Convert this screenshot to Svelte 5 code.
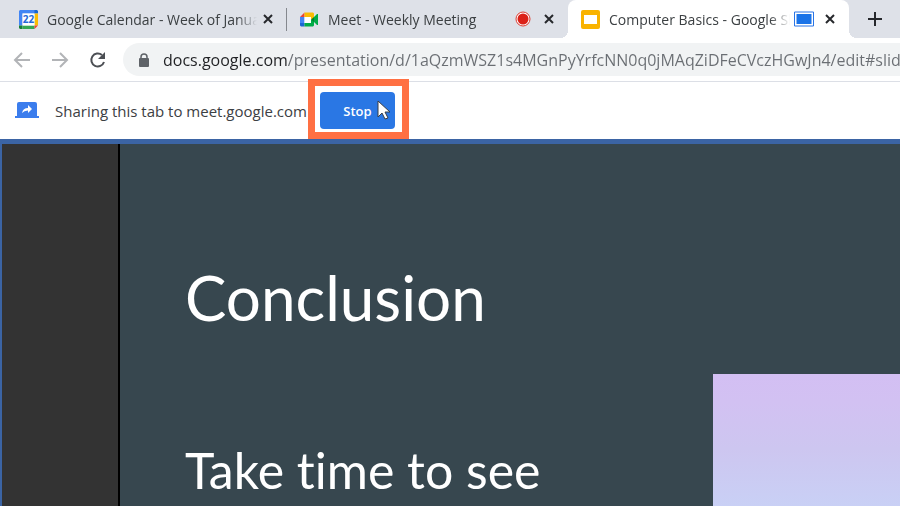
<script lang="ts">
	type Tab = { id: string; title: string; state?: string };

	const tabs: Tab[] = [
		{ id: 'calendar', title: 'Google Calendar - Week of January' },
		{ id: 'meet', title: 'Meet - Weekly Meeting', state: 'recording' },
		{ id: 'slides', title: 'Computer Basics - Google Slides', state: 'sharing' }
	];

	let active = $state('slides');
	let sharing = $state(true);
	let url = $state('docs.google.com/presentation/d/1aQzmWSZ1s4MGnPyYrfcNN0q0jMAqZiDFeCVczHGwJn4/edit#slide=id.p');
</script>

<div class="browser">
	<nav class="tabs" aria-label="Tabs">
		{#each tabs as tab}
			<div class="tab {tab.id === active ? 'active' : ''}">
				<button class="tab-label" onclick={() => active = tab.id}>
					{#if tab.id === 'calendar'}
						<svg class="favicon" viewBox="0 0 19 19">
							<path fill="#4285f4" d="M1 0h15v3.500H3.500v12H0V1z" />
							<path fill="#1967d2" d="M15.500 0H18l1 1v2.500h-3.500z" />
							<path fill="#fbbc04" d="M15.500 3.500H19v12h-3.500z" />
							<path fill="#188038" d="M0 15.500h3.500V19H1l-1-1z" />
							<path fill="#34a853" d="M3.500 15.500h12V19h-12z" />
							<path fill="#ea4335" d="M15.500 15.500H19L15.500 19z" />
							<path fill="#fff" d="M3.500 3.500h12v12h-12z" />
							<text x="9.5" y="13" text-anchor="middle">22</text>
						</svg>
					{:else if tab.id === 'meet'}
						<svg class="favicon" viewBox="0 0 19 19">
							<path fill="#ea4335" d="M4.500 2.500V7H0z" />
							<path fill="#4285f4" d="M0 7h4.500v6H0z" />
							<path fill="#1967d2" d="M0 13h4.500v3.500H1l-1-1z" />
							<path fill="#fbbc04" d="M4.500 2.500H13l1 1v5l-3 1V7H4.500z" />
							<path fill="#00ac47" d="M4.500 13H11v-3l3-1v6.500l-1 1H4.500z" />
							<path fill="#fff" d="M4.500 7H11v6H4.500z" />
							<path fill="#00832d" d="M11 9.500L14 7v5z" />
							<path fill="#00ac47" d="M14 7l3-3h1v11h-1l-3-3z" />
						</svg>
					{:else}
						<svg class="favicon" viewBox="0 0 19 19">
							<rect width="19" height="19" rx="2" fill="#f9b300" />
							<path fill="#fff" d="M3 5h13v9H3z" />
						</svg>
					{/if}
					<span class="title">{tab.title}</span>
				</button>
				{#if tab.state === 'recording'}
					<svg class="status" viewBox="0 0 20 16" role="img" aria-label="Recording">
						<circle cx="10" cy="8" r="7" fill="#fff" stroke="#dc3b30" />
						<circle cx="10" cy="8" r="5.500" fill="#db2118" />
					</svg>
				{:else if tab.state === 'sharing'}
					<svg class="status" viewBox="0 0 20 16" role="img" aria-label="Sharing">
						<path fill="#fff" stroke="#2a75e6" d="M.5 1h19v14H.5z" />
						<path fill="#1a73e8" d="M2.500 3h15v10h-15z" />
					</svg>
				{/if}
				<button class="close" aria-label="Close {tab.title}">
					<svg viewBox="0 0 10 10"><path d="M1 1l8 8M9 1l-8 8" /></svg>
				</button>
			</div>
		{/each}
		<button class="new-tab" aria-label="New tab">
			<svg viewBox="0 0 14 14"><path d="M7 0v14M0 7h14" /></svg>
		</button>
	</nav>

	<div class="toolbar">
		<button class="nav faded" aria-label="Back">
			<svg viewBox="0 0 18 18"><path d="M17 9H2M9 2L2 9l7 7" /></svg>
		</button>
		<button class="nav faded" aria-label="Forward">
			<svg viewBox="0 0 18 18"><path d="M1 9h15M9 2l7 7-7 7" /></svg>
		</button>
		<button class="nav" aria-label="Reload">
			<svg viewBox="0 0 18 18">
				<path d="M13 4A6.500 6.500 0 1 0 15 11" />
				<path class="solid" d="M16 1v7H9z" />
			</svg>
		</button>
		<label class="address">
			<svg viewBox="0 0 12 14" aria-hidden="true">
				<path fill="none" stroke="#5f6368" stroke-width="1.500" d="M3 6V4a3 3 0 0 1 6 0v2" />
				<rect x="1" y="5" width="10" height="9" rx="1" fill="#5f6368" />
			</svg>
			<input type="text" aria-label="Address" spellcheck="false" bind:value={url}>
		</label>
	</div>

	{#if sharing}
		<div class="infobar">
			<svg class="share" viewBox="0 0 24 18" aria-hidden="true">
				<path fill="#3b7ded" d="M4 0h16q2 0 2 2v12h2v2H0v-2h2V2q0-2 2-2z" />
				<path fill="#fff" d="M7 11q1-5 6-5V3l4 4-4 4V8.500q-4 0-6 2.500z" />
			</svg>
			<span>Sharing this tab to meet.google.com</span>
			<div class="callout">
				<button class="stop" onclick={() => sharing = false}>Stop</button>
				<svg class="cursor" viewBox="0 0 14 21" aria-hidden="true">
					<path d="M1 1v16l4-4 3 6 3-1-3-6h5z" />
				</svg>
			</div>
		</div>
	{/if}

	<main>
		<aside></aside>
		<section class="slide">
			<div class="copy">
				<h1>Conclusion</h1>
				<p>Take time to see</p>
			</div>
			<div class="picture"></div>
		</section>
	</main>
</div>

<style>
	:global(body) {
		margin: 0;
		overflow: hidden;
	}

	.browser {
		display: flex;
		flex-direction: column;
		height: 100vh;
		font-family: "Open Sans", "Noto Sans", sans-serif;
		color: #3c4043;
		background: #fff;
	}

	button {
		font: inherit;
		color: inherit;
		padding: 0;
		border: 0;
		background: none;
		cursor: pointer;
	}

	.tabs {
		display: flex;
		flex: none;
		height: 38px;
		padding-left: 6px;
		background: #dee1e8;
	}

	.tab {
		position: relative;
		display: flex;
		align-items: center;
		flex: 0 1 281px;
		min-width: 0;
		box-sizing: border-box;
		padding: 0 14px 0 13px;
		font-size: 14px;
	}
	.tab:first-child::after {
		content: '';
		position: absolute;
		right: 0;
		top: 8px;
		width: 1px;
		height: 23px;
		background: #85888e;
	}
	.tab.active {
		background: #fff;
		border-radius: 8px 8px 0 0;
	}
	.tab.active::before,
	.tab.active::after {
		content: '';
		position: absolute;
		bottom: 0;
		width: 8px;
		height: 8px;
		background: radial-gradient(circle at 0 0, #dee1e8 8px, #fff 8px);
	}
	.tab.active::before {
		left: -8px;
	}
	.tab.active::after {
		right: -8px;
		top: auto;
		background: radial-gradient(circle at 100% 0, #dee1e8 8px, #fff 8px);
	}

	.tab-label {
		display: flex;
		align-items: center;
		flex: 1;
		min-width: 0;
		gap: 9px;
		text-align: left;
	}

	.favicon {
		flex: none;
		width: 19px;
		height: 19px;
	}
	.favicon text {
		font: bold 10px "Open Sans", sans-serif;
		fill: #2468d8;
	}

	.title {
		flex: 1;
		overflow: hidden;
		white-space: nowrap;
		mask-image: linear-gradient(to left, transparent, #000 20px);
	}

	.status {
		flex: none;
		width: 20px;
		height: 16px;
		margin: 0 11px 0 4px;
	}

	.close {
		display: flex;
		flex: none;
	}
	.tab-label + .close {
		margin-left: 6px;
	}
	.close svg {
		width: 10px;
		height: 10px;
		stroke: #26282c;
		stroke-width: 2;
	}

	.new-tab {
		display: flex;
		align-items: center;
		margin-left: 19px;
	}
	.new-tab svg {
		width: 14px;
		height: 14px;
		stroke: #26282c;
		stroke-width: 2;
	}

	.toolbar {
		display: flex;
		align-items: center;
		flex: none;
		height: 43px;
		padding-left: 13px;
		gap: 20px;
		border-bottom: 1px solid #dcdfe6;
	}

	.nav {
		display: flex;
		flex: none;
	}
	.nav svg {
		width: 18px;
		height: 18px;
		fill: none;
		stroke: #4c4f54;
		stroke-width: 2;
	}
	.nav .solid {
		fill: #4c4f54;
		stroke: none;
	}
	.nav.faded svg {
		stroke: #b2b4b7;
	}

	.address {
		display: flex;
		align-items: center;
		flex: 1;
		min-width: 0;
		height: 33px;
		margin-left: -4px;
		padding-left: 15px;
		gap: 13px;
		border-radius: 17px 0 0 17px;
		background: #f1f3f4;
	}
	.address svg {
		flex: none;
		width: 12px;
		height: 14px;
	}
	.address input {
		flex: 1;
		min-width: 0;
		padding: 0;
		border: 0;
		outline: none;
		font: inherit;
		font-size: 16px;
		/* host part dark, path grey */
		color: transparent;
		caret-color: #202124;
		background: linear-gradient(to right, #202124 124px, #6a6e73 124px);
		background-clip: text;
	}

	.infobar {
		display: flex;
		align-items: center;
		flex: none;
		height: 57px;
		padding-left: 15px;
		font-size: 15px;
	}
	.share {
		width: 24px;
		height: 18px;
		margin-right: 16px;
	}

	.callout {
		position: relative;
		margin-left: 13px;
	}
	.callout::after {
		content: '';
		position: absolute;
		inset: -13px -14px -10px -12px;
		border: 7px solid #ff7043;
		pointer-events: none;
	}
	.stop {
		display: block;
		width: 75px;
		height: 37px;
		border-radius: 4px;
		font-size: 13px;
		font-weight: 600;
		color: #fff;
		background: #2a77e4;
	}
	.cursor {
		position: absolute;
		left: 57px;
		top: 8px;
		width: 14px;
		height: 21px;
		fill: #fff;
		stroke: #3b3e45;
		pointer-events: none;
	}

	main {
		display: flex;
		flex: 1;
		min-height: 0;
		border-top: 5px solid #3b64a4;
		border-left: 2px solid #3b64a4;
		background: #37474f;
	}
	aside {
		flex: none;
		width: 116px;
		border-right: 2px solid #000;
		background: #333;
	}

	.slide {
		display: flex;
		flex: 1;
		justify-content: space-between;
		min-width: 0;
		padding-left: 65px;
		font-family: Lato, sans-serif;
		font-variant-ligatures: none;
		color: #fff;
	}
	h1 {
		margin: 115px 0 0;
		font-size: 62px;
		font-weight: 400;
		line-height: 76px;
	}
	p {
		margin: 106px 0 0;
		font-size: 50px;
		line-height: 58px;
		white-space: nowrap;
	}
	.picture {
		flex: none;
		width: 187px;
		margin-top: 230px;
		background: linear-gradient(#d3bff3, #d2c1f2 28px, #cdc6f0 75px, #c9d0f5);
	}
</style>
